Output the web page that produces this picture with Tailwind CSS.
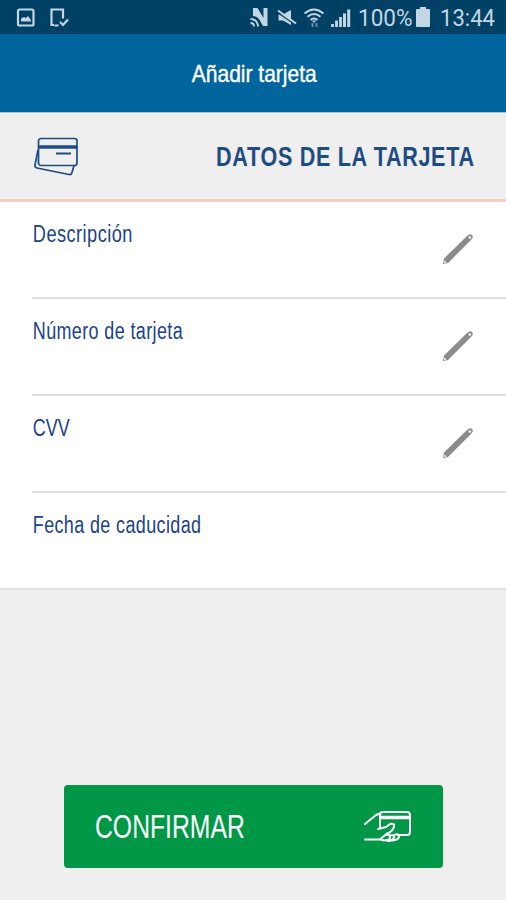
<!DOCTYPE html>
<html lang="es">
<head>
    <meta charset="UTF-8">
    <meta name="viewport" content="width=device-width, initial-scale=1.0">
    <title>Añadir tarjeta</title>
    <script src="https://cdn.jsdelivr.net/npm/@tailwindcss/browser@4"></script>
</head>
<body class="bg-[#efefef] font-['Liberation_Sans',Arial,sans-serif]">
    <div class="w-[506px] h-[900px] flex flex-col overflow-hidden">

        <!-- Barra de estado -->
        <div class="h-[34px] shrink-0 bg-[#004165] text-[#c3d6e3] flex items-center justify-between">
            <svg class="w-[80px] h-[34px]" viewBox="0 0 80 34" fill="none" stroke="currentColor" stroke-width="2.200">
                <rect x="18" y="9.500" width="15.500" height="16" rx="1.500"/>
                <path d="M21 21.500v-3l3-1.500 2 1 2-2 3 4v1.500z" fill="currentColor" stroke="none"/>
                <path d="M54 25h-2.500V9.500h11.500v9M54.500 25.500h4M60 22l3 3 5-5.500"/>
            </svg>
            <div class="flex items-center h-[34px] pr-[10px]">
                <svg class="w-[116px] h-[34px] shrink-0" viewBox="0 0 116 34" fill="none" stroke="currentColor" stroke-width="2">
                    <path d="M11 8h4.500l6 10V8H25.500v18H21l-4-7q-2.500-3-6-3z" fill="currentColor" stroke="none"/>
                    <path d="M8.500 19q7 0 7.500 7.500M8.500 23q3.500 0 3.500 3.500" stroke-width="1.800"/>
                    <path d="M36.500 14.500h4.500l8-4.500v15l-8-4.500h-4.500z" fill="currentColor" stroke="none"/>
                    <path d="M35.500 12.500l17.500 12" stroke="#004165" stroke-width="1.500"/>
                    <path d="M36 10.500l18 13"/>
                    <path d="M62.500 13.500q9.500-8 19 0M65.500 16.800q6.500-5.500 13 0M68.500 20q3.500-3 7 0"/>
                    <path d="M70 20.500h4l-2 2.500z" fill="currentColor" stroke="none"/>
                    <path d="M70.500 23v4M74.500 23v4" stroke-width="2" opacity=".5"/>
                    <path d="M90.500 27v-3M94.500 27v-6.500M98.500 27V17" stroke-width="2.800"/>
                    <path d="M102.500 27V13.500M106.700 27V9.500" stroke-width="3"/>
                </svg>
                <span class="w-[57px] shrink-0 font-[Roboto] text-[23px] leading-[34px] pt-[3px] whitespace-nowrap"><span class="inline-block origin-left scale-x-[0.98]">100%</span></span>
                <svg class="w-[17px] h-[22px] shrink-0" viewBox="0 0 17 22" fill="currentColor">
                    <path d="M2 3h3V1h6v2h3q1 0 1 1v16q0 1-1 1H2q-1 0-1-1V4q0-1 1-1z"/>
                </svg>
                <span class="ml-2 w-[56px] shrink-0 font-[Roboto] text-[23px] leading-[34px] pt-[3px] whitespace-nowrap"><span class="inline-block origin-left scale-x-[0.960]">13:44</span></span>
            </div>
        </div>

        <!-- Cabecera -->
        <header class="h-[79px] shrink-0 bg-[#00659d] border-b border-[#a9c8da] flex justify-center">
            <h1 class="text-white text-[24px] leading-[79px] whitespace-nowrap pl-[2px] scale-x-[0.875] [-webkit-text-stroke:0.4px_white]">Añadir tarjeta</h1>
        </header>

        <!-- Datos de la tarjeta -->
        <section class="h-[89px] shrink-0 border-b-3 border-[#f6cdc4] flex items-center justify-between pl-8 pr-[31px]">
            <svg class="w-[48px] h-[42px] mt-[2px]" viewBox="0 0 48 42" fill="none" stroke="#1d4c85" stroke-width="1.700" stroke-linejoin="round">
                <rect x="6.500" y="2.500" width="38.500" height="27" rx="2.500"/>
                <path d="M6.500 11h38.500" stroke-width="3.500"/>
                <path d="M24 17.500h15" stroke-width="2"/>
                <path d="M6 14L3 29q-.500 2.500 2 3l32 6.500q2.500.500 3-2l2-7"/>
            </svg>
            <h2 class="text-[#1d4c85] text-[28.500px] leading-[84px] font-bold whitespace-nowrap origin-right scale-x-[0.757] tracking-[0.900px]">DATOS DE LA TARJETA</h2>
        </section>

        <!-- Formulario -->
        <div class="bg-white shrink-0 pl-8 border-b-2 border-[#e2e2e2] text-[#1b4387] text-[23px]">
            <div class="h-[97px] flex justify-between border-b-2 border-[#dedede] pr-8">
                <label class="leading-[26px] pt-[19px] pl-px whitespace-nowrap origin-left scale-x-[0.79] tracking-[0.600px]">Descripción</label>
                <svg class="w-[34px] h-[34px] mt-[30px]" viewBox="0 0 34 34">
                    <path d="M3 32l1-5.500L27 4q3-3 5-1t-1 5L8 31z" fill="#8b8b8b"/>
                    <path d="M4.500 28.500l2 2-2.500.500z" fill="#fff"/>
                    <circle cx="29.800" cy="5.500" r="1.300" fill="#fff"/>
                </svg>
            </div>
            <div class="h-[97px] flex justify-between border-b-2 border-[#dedede] pr-8">
                <label class="leading-[26px] pt-[19px] pl-px whitespace-nowrap origin-left scale-x-[0.780] tracking-[0.500px]">Número de tarjeta</label>
                <svg class="w-[34px] h-[34px] mt-[30px]" viewBox="0 0 34 34">
                    <path d="M3 32l1-5.500L27 4q3-3 5-1t-1 5L8 31z" fill="#8b8b8b"/>
                    <path d="M4.500 28.500l2 2-2.500.500z" fill="#fff"/>
                    <circle cx="29.800" cy="5.500" r="1.300" fill="#fff"/>
                </svg>
            </div>
            <div class="h-[97px] flex justify-between border-b-2 border-[#dedede] pr-8">
                <label class="leading-[26px] pt-[19px] pl-px whitespace-nowrap origin-left scale-x-[0.780]">CVV</label>
                <svg class="w-[34px] h-[34px] mt-[30px]" viewBox="0 0 34 34">
                    <path d="M3 32l1-5.500L27 4q3-3 5-1t-1 5L8 31z" fill="#8b8b8b"/>
                    <path d="M4.500 28.500l2 2-2.500.500z" fill="#fff"/>
                    <circle cx="29.800" cy="5.500" r="1.300" fill="#fff"/>
                </svg>
            </div>
            <div class="h-[95px] flex">
                <label class="leading-[26px] pt-[19px] pl-px whitespace-nowrap origin-left scale-x-[0.780] tracking-[0.500px]">Fecha de caducidad</label>
            </div>
        </div>

        <!-- Botón -->
        <button class="mt-auto mb-8 ml-16 w-[379px] h-[83px] shrink-0 rounded-[4px] bg-[#009846] text-white flex items-center justify-between pl-[31px] pr-[30px]">
            <span class="text-[33px] leading-[83px] whitespace-nowrap origin-left scale-x-[0.75]">CONFIRMAR</span>
            <svg class="w-[52px] h-[36px]" viewBox="0 0 52 36" fill="none" stroke="currentColor" stroke-width="2" stroke-linecap="round" stroke-linejoin="round">
                <path d="M19 14V6q0-3 3-3h24q3 0 3 3v17q0 3-3 3H37"/>
                <path d="M20 8.500h28" stroke-width="3.500"/>
                <path d="M4 15L15 6l4-1.500M4 30.500h15l4 1M17 20l8-2 4-3q5-1 4 2.500-1 5-7 7l-6 5M19 14v5"/>
                <path d="M25 26q4-1 4 2t-4 3.500M29 26.500q4-1 4 1.500t-3.500 3.500q-2 1-5-.500M33 26q5-2 5 1t-4 4l-3 .500"/>
            </svg>
        </button>
    </div>
</body>
</html>
